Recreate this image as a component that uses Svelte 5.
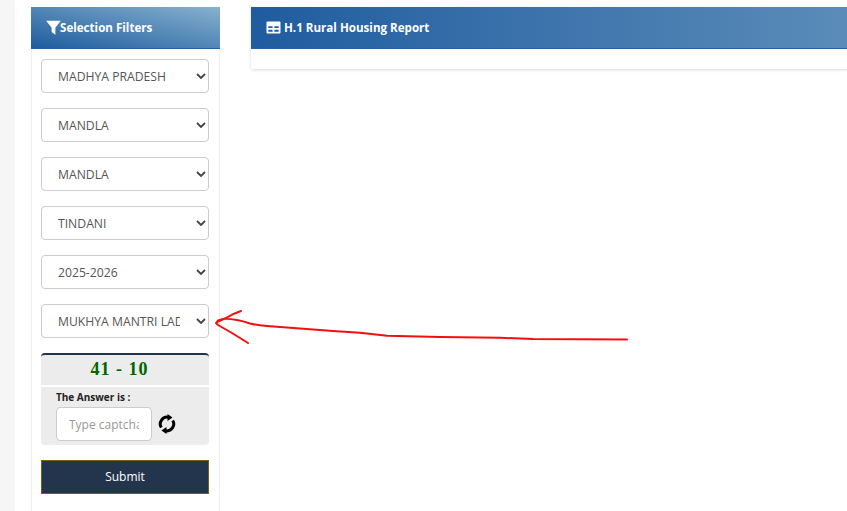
<script>
    let filters = [
        "MADHYA PRADESH",
        "MANDLA",
        "MANDLA",
        "TINDANI",
        "2025-2026",
        "MUKHYA MANTRI LADLI BEHNA AWAS YOJANA"
    ];
</script>

<div class="page">
    <aside class="side">
        <div class="head side-head">
            <svg class="funnel" viewBox="0 0 16 16" width="15" height="15"><path d="M0.2 0.800h15.600L10 8.200V15.800L6 12.800V8.200z" fill="#fff"/></svg>
            <span>Selection Filters</span>
        </div>
        <div class="body">
            {#each filters as f}
                <div class="sel">
                    <select>
                        <option>{f}</option>
                    </select>
                    <svg class="chev" viewBox="0 0 10 6" width="10" height="6"><path d="M1 1l4 4 4-4" fill="none" stroke="#444" stroke-width="1.800"/></svg>
                </div>
            {/each}

            <div class="captcha">41 - 10</div>
            <div class="answer">
                <label for="cap">The Answer is :</label>
                <div class="row">
                    <input id="cap" type="text" placeholder="Type captcha" />
                    <svg class="refresh" viewBox="0 0 18 20" width="18" height="20">
                        <path d="M3.300 13.500A6.800 6.800 0 0 1 10.500 3.300" fill="none" stroke="#000" stroke-width="3"/>
                        <path d="M14.700 6.500A6.800 6.800 0 0 1 7.500 16.700" fill="none" stroke="#000" stroke-width="3"/>
                        <path d="M9.500 0L14.500 3.500 9.500 7z" fill="#000"/>
                        <path d="M8.500 13L3.500 16.500 8.500 20z" fill="#000"/>
                    </svg>
                </div>
            </div>
            <button class="submit">Submit</button>
        </div>
    </aside>

    <main class="report">
        <div class="head main-head">
            <svg class="table" viewBox="0 0 15 13" width="15" height="13"><path fill-rule="evenodd" d="M1.500 0.500h12a1 1 0 0 1 1 1v10a1 1 0 0 1-1 1h-12a1 1 0 0 1-1-1v-10a1 1 0 0 1 1-1zM2.300 5.200v1.900h4.300V5.200zM8.400 5.200v1.900h4.300V5.200zM2.300 8.700v2h4.300v-2zM8.400 8.700v2h4.300v-2z" fill="#fff"/></svg>
            <span>H.1 Rural Housing Report</span>
        </div>
        <div class="report-body"></div>
    </main>

    <svg class="scribble" viewBox="0 0 847 511" width="847" height="511">
        <path d="M627 339.500 L533 339 L500 337.800 L440 337 L387 335.700 L360 332.700 L333 331 L267 326 Q256 325 250 323.500 Q243 321 237 320 Q228 318.500 223 319 L218 320.500 L216 323 L218 325 L232 333 L248 343 M241 311 Q232 314 226 318 L217 322" fill="none" stroke="#f40f0f" stroke-width="2" stroke-linecap="round" stroke-linejoin="round"/>
    </svg>
</div>

<style>
    :global(body) {
        background: #fff;
    }

    .page {
        position: relative;
        display: flex;
        align-items: flex-start;
        gap: 31px;
        width: 847px;
        height: 511px;
        box-sizing: border-box;
        padding: 7px 0 0 16px;
        overflow: hidden;
        font-family: "Open Sans", sans-serif;
        border-left: 15px solid #f6f6f6;
    }

    .side {
        flex: none;
        width: 189px;
        height: 510px;
        box-sizing: border-box;
        border: 1px solid #eee;
        border-top: none;
        border-bottom: none;
    }

    .head {
        display: flex;
        align-items: center;
        height: 42px;
        box-sizing: border-box;
        border-bottom: 1px solid #2463a3;
        color: #fff;
        font-size: 11.600px;
        font-weight: 700;
    }

    .side-head {
        margin: 0 -1px 0 -1px;
        padding-left: 15px;
        background: linear-gradient(to top right, #1d5c9e, #87b1cf);
    }

    .funnel {
        margin-right: -1px;
    }

    .main-head {
        gap: 3px;
        padding-left: 15px;
        background: linear-gradient(to right, #1f5c9f, #5b8cb9);
    }

    .body {
        padding: 10px 10px 0 9px;
    }

    .sel {
        position: relative;
        margin-bottom: 15px;
    }

    select {
        display: block;
        width: 100%;
        height: 34px;
        box-sizing: border-box;
        padding: 0 28px 0 16px;
        appearance: none;
        background: #fff;
        border: 1px solid #ccc;
        border-radius: 4px;
        color: #555;
        font: 12.200px "Open Sans", sans-serif;
    }

    .chev {
        position: absolute;
        right: 3px;
        top: 14px;
    }

    .captcha {
        height: 32px;
        box-sizing: border-box;
        margin-top: 15px;
        padding-right: 11px;
        background: #ececec;
        border-top: 2px solid #22354d;
        border-radius: 4px 4px 0 0;
        color: #060;
        font: 700 18px/29px "Liberation Serif", serif;
        letter-spacing: 1px;
        text-align: center;
    }

    .answer {
        height: 58px;
        box-sizing: border-box;
        margin-top: 2px;
        padding: 3px 15px 0;
        background: #ececec;
        border-radius: 0 0 4px 4px;
    }

    label {
        display: block;
        height: 17px;
        color: #222;
        font-size: 10px;
        font-weight: 700;
        line-height: 15px;
    }

    .row {
        display: flex;
        align-items: center;
        gap: 6px;
    }

    input {
        width: 96px;
        height: 34px;
        box-sizing: border-box;
        padding: 0 12px;
        background: #fff;
        border: 1px solid #ccc;
        border-radius: 4px;
        font: 12px "Open Sans", sans-serif;
    }

    input::placeholder {
        color: #999;
    }

    .refresh {
        flex: none;
    }

    .submit {
        display: block;
        width: 100%;
        height: 34px;
        margin-top: 15px;
        padding: 0 0 2px;
        background: #22354d;
        border: 1px solid #7a5f10;
        color: #fff;
        font: 12px "Open Sans", sans-serif;
    }

    .report {
        flex: 1;
        margin-right: -1px;
        box-shadow: 0 1px 3px rgba(0, 0, 0, 0.15);
    }

    .report-body {
        height: 20px;
        background: #fff;
    }

    .scribble {
        position: absolute;
        left: -15px;
        top: 0;
        pointer-events: none;
    }
</style>
